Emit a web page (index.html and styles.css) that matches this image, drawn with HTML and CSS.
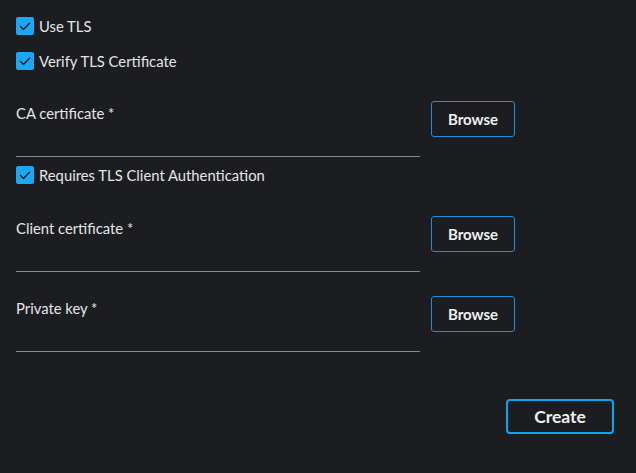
FILE: index.html
```html
<!DOCTYPE html>
<html>
<head>
<meta charset="utf-8">
<link rel="stylesheet" href="styles.css">
</head>
<body>
<div class="form">
  <div class="check first">
    <span class="box"><svg width="18" height="18" viewBox="0 0 18 18"><polyline points="4.5,9.5 7.5,12.5 13.5,6.2" fill="none" stroke="#12161a" stroke-width="1.3" stroke-linecap="round" stroke-linejoin="round"/></svg></span>
    <span class="check-label">Use TLS</span>
  </div>
  <div class="check second">
    <span class="box"><svg width="18" height="18" viewBox="0 0 18 18"><polyline points="4.5,9.5 7.5,12.5 13.5,6.2" fill="none" stroke="#12161a" stroke-width="1.3" stroke-linecap="round" stroke-linejoin="round"/></svg></span>
    <span class="check-label">Verify TLS Certificate</span>
  </div>
  <div class="field f1">
    <div class="field-main"><span class="field-label">CA certificate *</span></div>
    <button class="browse">Browse</button>
  </div>
  <div class="check third">
    <span class="box"><svg width="18" height="18" viewBox="0 0 18 18"><polyline points="4.5,9.5 7.5,12.5 13.5,6.2" fill="none" stroke="#12161a" stroke-width="1.3" stroke-linecap="round" stroke-linejoin="round"/></svg></span>
    <span class="check-label">Requires TLS Client Authentication</span>
  </div>
  <div class="field f2">
    <div class="field-main"><span class="field-label">Client certificate *</span></div>
    <button class="browse">Browse</button>
  </div>
  <div class="field f3">
    <div class="field-main"><span class="field-label">Private key *</span></div>
    <button class="browse">Browse</button>
  </div>
  <div class="actions">
    <button class="create">Create</button>
  </div>
</div>
</body>
</html>
```
FILE: styles.css
```css
html, body {
  margin: 0;
  padding: 0;
  background: #1b1d21;
  height: 100%;
}
body {
  font-family: Lato, "Open Sans", sans-serif;
  color: #e6e6e6;
  font-size: 14.8px;
}
.form {
  padding: 17px 22px 0 16px;
  display: flex;
  flex-direction: column;
}
.check {
  display: flex;
  align-items: center;
  gap: 5px;
  height: 18px;
}
.second { margin-top: 17px; }
.third { margin-top: 9px; }
.box {
  width: 18px;
  height: 18px;
  background: #1ba7f2;
  border-radius: 2px;
  display: block;
}
.box svg { display: block; }
.check-label {
  line-height: 18px;
}
.field {
  display: flex;
  align-items: flex-start;
  gap: 11px;
}
.f1 { margin-top: 31px; }
.f2 { margin-top: 32px; }
.f3 { margin-top: 24px; }
.field-main {
  width: 404px;
  height: 53px;
  border-bottom: 1px solid #8a8d90;
  padding-top: 2px;
}
.field-label {
  display: block;
  line-height: 20px;
}
.browse {
  width: 84px;
  height: 36px;
  background: transparent;
  border: 1px solid #1e90db;
  border-radius: 3px;
  color: #f0f0f0;
  font-family: inherit;
  font-size: 15px;
  font-weight: 700;
  padding: 0;
}
.actions {
  display: flex;
  justify-content: flex-end;
  margin-top: 47px;
}
.create {
  width: 108px;
  height: 35px;
  background: transparent;
  border: 2px solid #0fa5ef;
  border-radius: 4px;
  color: #f0f0f0;
  font-family: inherit;
  font-size: 17.5px;
  font-weight: 700;
  padding: 0;
}
```
